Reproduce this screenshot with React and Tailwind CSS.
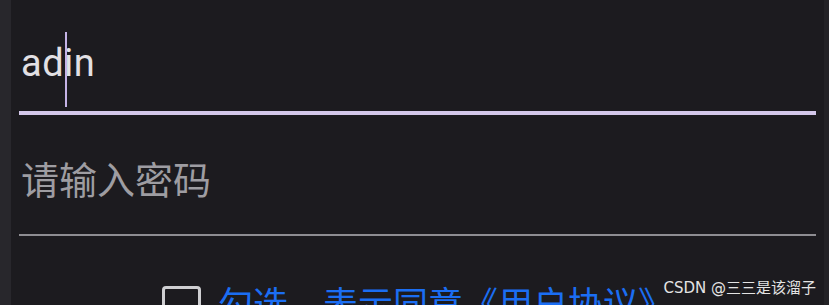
import React from 'react';

const App = () => {
    return (
        <div className="relative flex h-[305px] w-full overflow-hidden bg-[#1c1b1f] font-['Roboto','Noto_Sans_CJK_SC',sans-serif]">
            {/* left edge of the window */}
            <div className="w-[11px] shrink-0 bg-[#28272c]" />

            <div className="flex-1 px-[8px]">
                {/* account field, focused */}
                <div className="pt-[41px] pb-[26px] pl-[2px]">
                    <div className="text-[38px] leading-[44px] tracking-[0.5px] text-[#e2e0e4]">
                        ad
                        <span className="relative inline-block w-0 align-top">
                            <span className="absolute left-[1px] top-[-9px] h-[75px] w-[2px] bg-[#c5b3e6]" />
                        </span>
                        in
                    </div>
                </div>
                <div className="h-[4px] bg-[#d3c7ea]" />

                {/* password field */}
                <div className="pt-[44px] pb-[31px] pl-[2px]">
                    <div className="text-[38px] leading-[44px] text-[#9e9da2]">请输入密码</div>
                </div>
                <div className="h-[2px] bg-[#8e8d92]" />

                {/* agreement */}
                <div className="flex items-start justify-center gap-[17px] pt-[50px]">
                    <div className="h-[39px] w-[39px] shrink-0 rounded-[4px] border-[3px] border-[#cfcfd2]" />
                    <p className="text-[35px] leading-[40px] text-[#1b6ef3]">勾选，表示同意《用户协议》</p>
                </div>
            </div>

            {/* right edge */}
            <div className="w-[5px] shrink-0 bg-[#232226]" />

            {/* watermark */}
            <span className="absolute right-[13px] bottom-[8px] text-[15px] leading-[18px] text-[#e4e4e4] font-['DejaVu_Sans','Noto_Sans_CJK_SC',sans-serif]">
                CSDN @三三是该溜子
            </span>
        </div>
    );
};

export default App;
